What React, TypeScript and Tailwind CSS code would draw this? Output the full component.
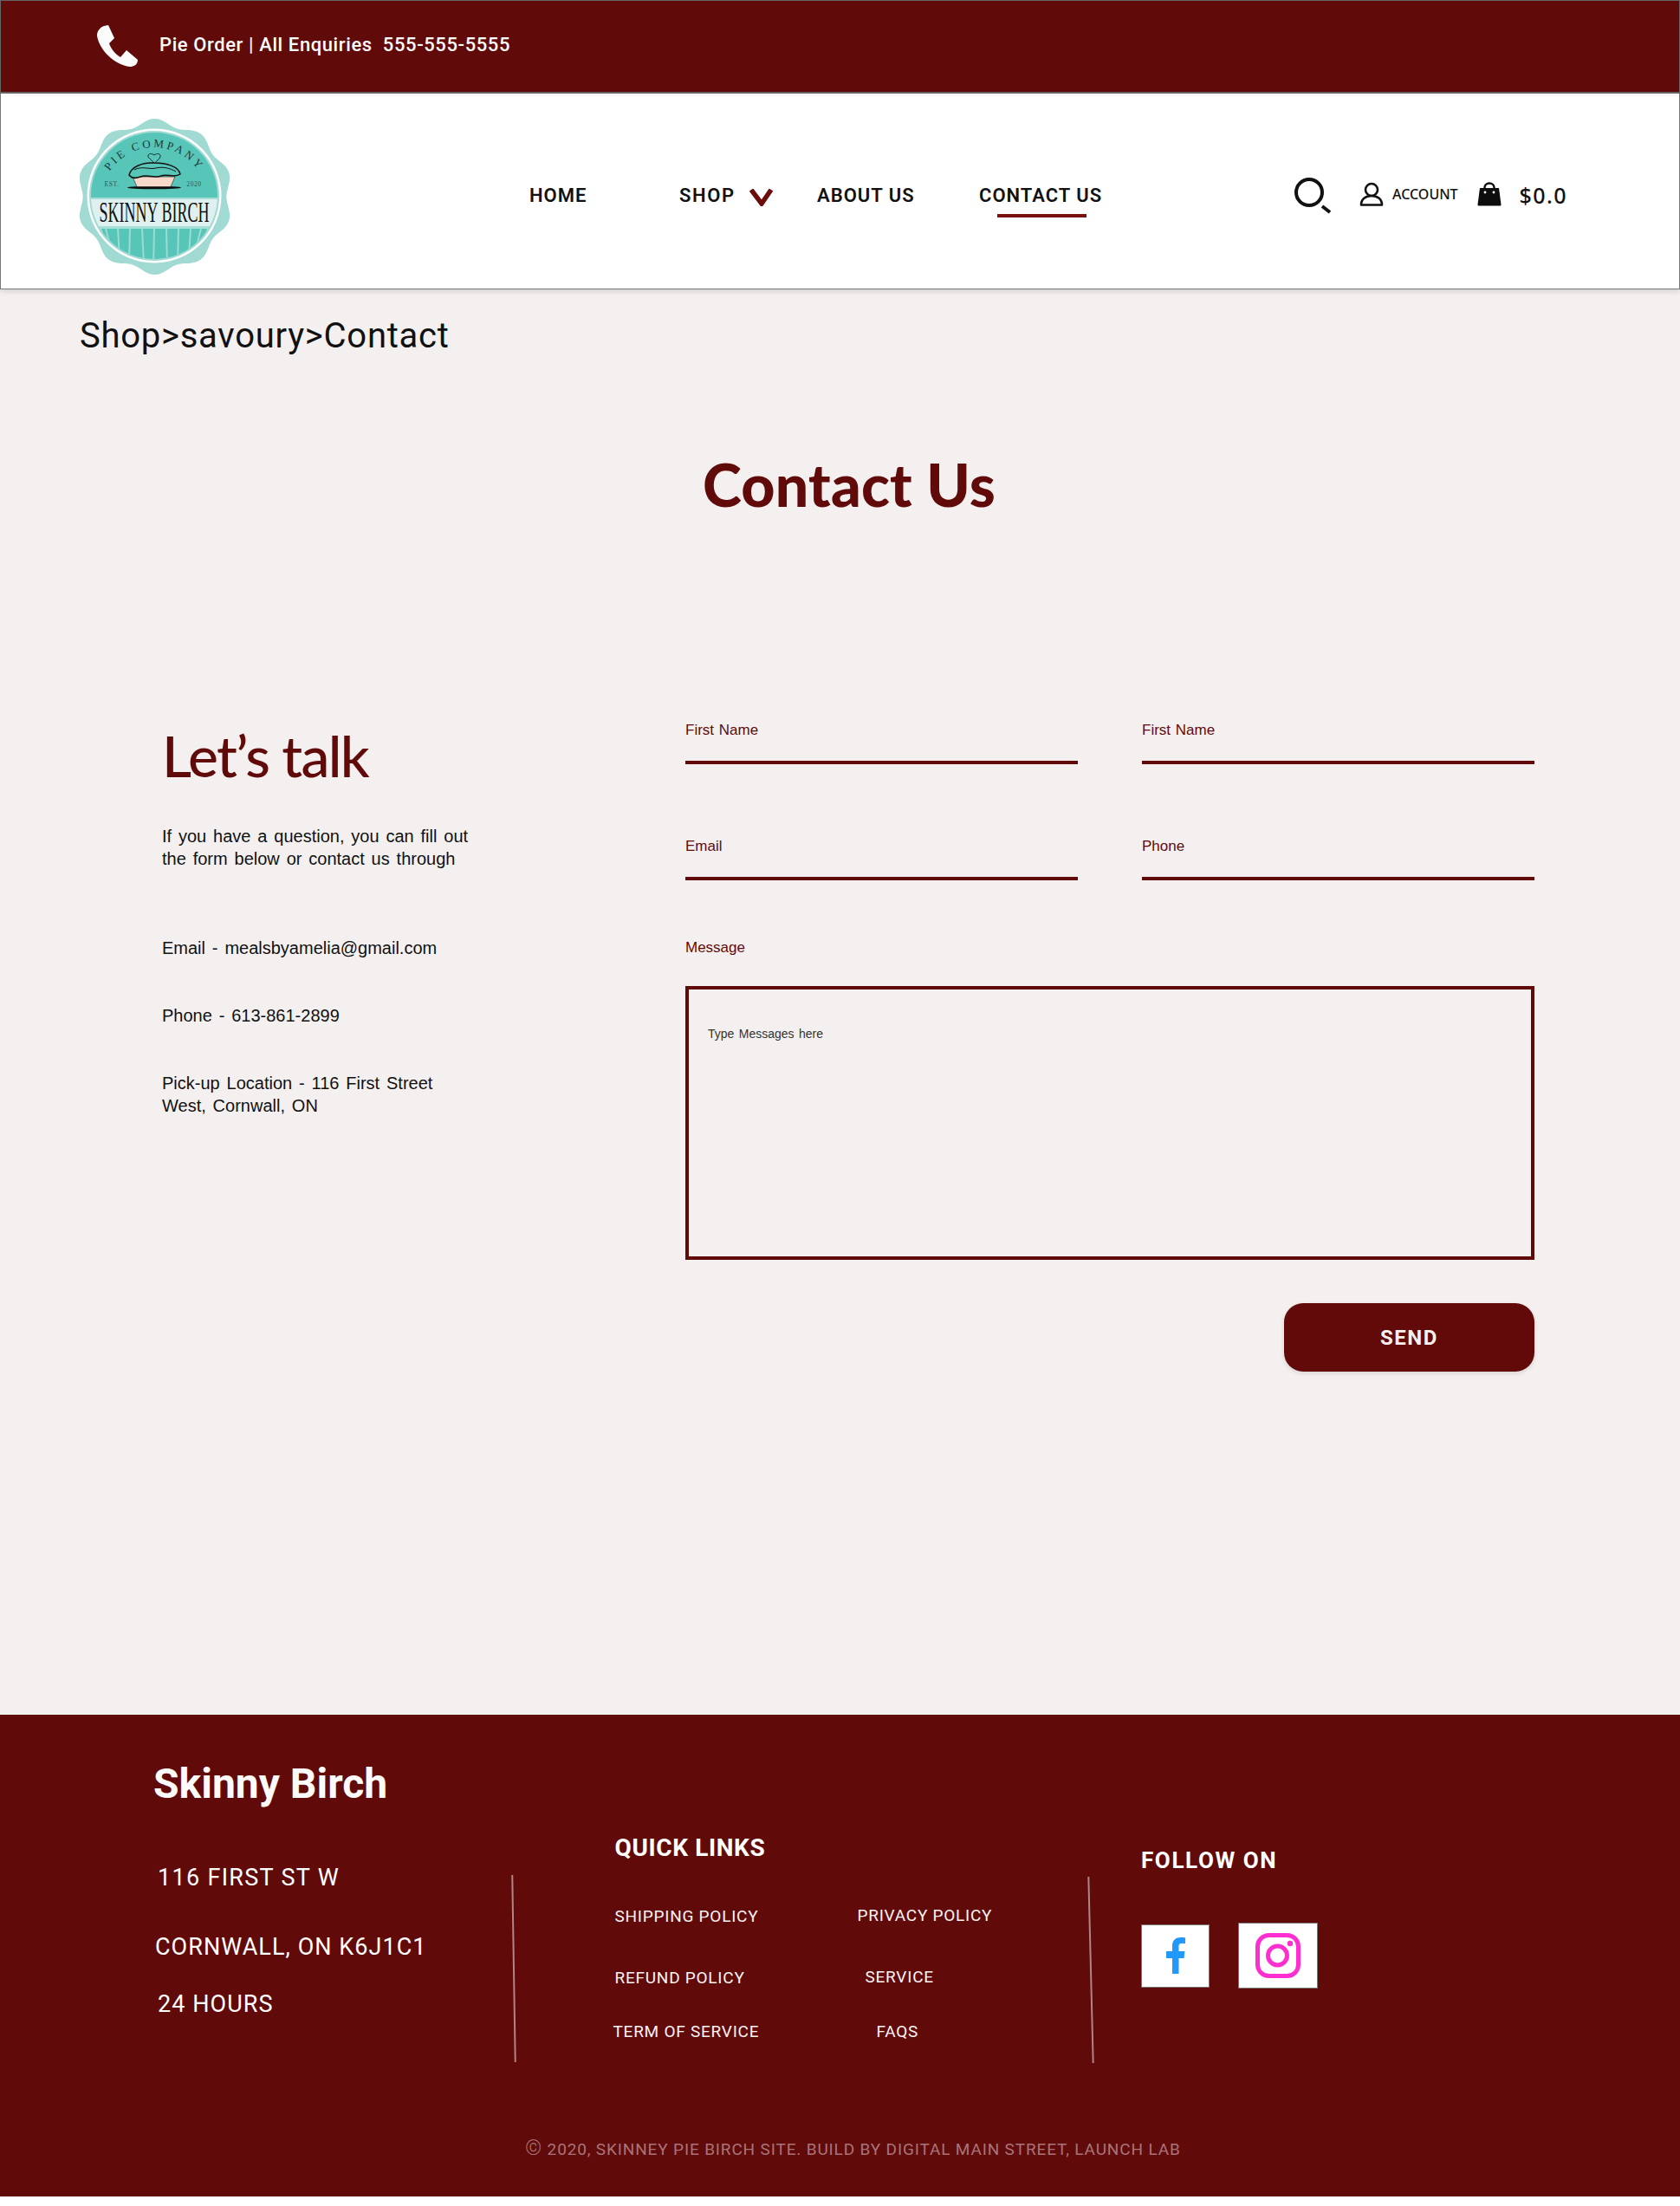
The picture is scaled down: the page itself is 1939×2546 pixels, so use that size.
import React from "react";

function scallopPath() {
  const pts: string[] = [];
  const cx = 86.5, cy = 90;
  for (let i = 0; i < 360; i += 3) {
    const a = (i * Math.PI) / 180;
    const r = 1 + 0.043 * Math.cos(10 * a);
    const x = cx + 86.5 * r * Math.sin(a);
    const y = cy - 86.3 * r * Math.cos(a);
    pts.push(`${x.toFixed(1)} ${y.toFixed(1)}`);
  }
  return "M" + pts.join("L") + "Z";
}

function Logo() {
  const trunks = [
    "M30 127L36 150",
    "M44 127L46 160",
    "M58 127L57 165",
    "M72 127L74 168",
    "M86 127L85 170",
    "M100 127L101 168",
    "M114 127L113 165",
    "M128 127L126 158",
    "M140 127L134 150",
  ];
  return (
    <svg width="173" height="180" viewBox="0 0 173 180" className="block">
      <defs>
        <clipPath id="inner">
          <circle cx="86" cy="89" r="73" />
        </clipPath>
        <path id="arc" d="M24 95 A62 62 0 0 1 148 95" />
      </defs>
      <path d={scallopPath()} fill="#a0dad3" />
      <circle cx="86" cy="89" r="77.5" fill="#ffffff" />
      <circle cx="86" cy="89" r="75" fill="#a0dad3" />
      <g clipPath="url(#inner)">
        <rect x="0" y="0" width="173" height="91" fill="#58c5b9" />
        <rect x="0" y="91" width="173" height="3" fill="#a8ded7" />
        <rect x="0" y="93" width="173" height="31" fill="#def0ef" />
        <rect x="0" y="124" width="173" height="50" fill="#a6dfd8" />
        <path d="M25 127H147L132 170H40Z" fill="#58c5b9" />
        {trunks.map((d) => (
          <path key={d} d={d} stroke="#9bdcd3" strokeWidth="2" fill="none" />
        ))}
      </g>
      <text fontFamily="'Liberation Serif', serif" fontSize="13" letterSpacing="3.2" fill="#1b3a38">
        <textPath href="#arc" startOffset="50%" textAnchor="middle">PIE COMPANY</textPath>
      </text>
      <path d="M86 52c-1-3-5-5-7-8-1-3 3-5 7-2 4-3 8-1 7 2-1 3-5 5-7 8z" fill="none" stroke="#16302f" strokeWidth="1" />
      <text x="37" y="78" textAnchor="middle" fontFamily="'Liberation Serif', serif" fontSize="7.500" letterSpacing=".6" fill="#1f5b57">EST.</text>
      <text x="132" y="78" textAnchor="middle" fontFamily="'Liberation Serif', serif" fontSize="7.500" letterSpacing=".6" fill="#1f5b57">2020</text>
      <ellipse cx="86" cy="79.500" rx="31" ry="1.800" fill="#0d0d0d" />
      <path d="M61 67H110L105 78.500H66Z" fill="#f7d9cc" stroke="#1a1a1a" strokeWidth=".6" />
      <path d="M57 65C59 56 72 50 86 51C100 51 114 55 116 64C109 69 101 63 94 66C86 69 78 64 70 67C65 69 60 69 57 65Z" fill="#58c5b9" stroke="#111" strokeWidth="1.500" />
      <path d="M63 59C72 54 80 59 88 57C96 55 104 57 111 61" fill="none" stroke="#111" strokeWidth="1" />
      <text transform="translate(86 119) scale(1 1.83)" textAnchor="middle" fontFamily="'Liberation Serif', serif" fontSize="18" fill="#0e0e0e">SKINNY BIRCH</text>
    </svg>
  );
}

function PhoneIcon() {
  return (
    <svg width="48" height="48" viewBox="0 0 48 48" className="block shrink-0">
      <path d="M8 1 L13 0 L20 15 L14 21 C16 28 22 34 27 37 L34 29 L47 40 C47 46 42 48 38 48 C20 46 2 28 0 12 C0 7 3 3 8 1 Z" fill="#fbfbfb" />
    </svg>
  );
}

function Field({ label }: { label: string }) {
  return (
    <div>
      <div className="font-['Liberation_Sans'] text-[17px] leading-[20px] [word-spacing:1px] text-[#600a0a]">{label}</div>
      <div className="mt-[25px] h-[4px] bg-[#600a0a]" />
    </div>
  );
}

const navItem = "font-['Roboto'] text-[22px] leading-[26px] font-semibold tracking-[1px] text-[#111]";
const addressLine = "text-[27px] leading-[32px] tracking-[1.05px]";

export default function App() {
  return (
    <div className="w-[1939px] bg-white font-['Roboto']">
      <div className="h-[108px] bg-[#600a0a] border border-[#666] border-b-2 flex pl-[111px]">
        <div className="mt-[28px]"><PhoneIcon /></div>
        <div className="ml-[24px] mt-[38px] text-[22px] leading-[26px] font-medium tracking-[0.6px] text-[#fbfbfb] whitespace-pre">
          Pie Order | All Enquiries  555-555-5555
        </div>
      </div>

      <div className="relative h-[226px] bg-white border border-[#777] border-t-0 shadow-[0_2px_6px_rgba(0,0,0,0.15)] flex items-start">
        <div className="ml-[91px] mt-[29px] w-[519px] shrink-0"><Logo /></div>
        <div className="mt-[105px] flex items-start">
          <div className={`${navItem} w-[173px]`}>HOME</div>
          <div className={`${navItem} w-[159px] flex`}>
            <span className="tracking-[1.6px]">SHOP</span>
            <svg width="28" height="20" viewBox="0 0 28 20" className="ml-[16px] mt-[5px]">
              <path d="M2 1 L14 17 L25 1" fill="none" stroke="#6b0d0d" strokeWidth="5.5" />
            </svg>
          </div>
          <div className={`${navItem} w-[187px]`}>ABOUT US</div>
          <div className={`${navItem} w-[363px]`}>
            <div>CONTACT US</div>
            <div className="ml-[21px] mt-[8px] h-[4px] w-[103px] bg-[#7a1111]" />
          </div>
          <svg width="44" height="42" viewBox="0 0 44 42" className="-mt-[8px] shrink-0">
            <circle cx="18" cy="17" r="15" fill="none" stroke="#111" strokeWidth="4" />
            <path d="M33 33 L42 40" stroke="#111" strokeWidth="4" />
          </svg>
          <svg width="28" height="28" viewBox="0 0 28 28" className="ml-[32px] -mt-[3px] shrink-0">
            <circle cx="14" cy="9" r="7" fill="none" stroke="#111" strokeWidth="2.6" />
            <path d="M2 26.5 C2 20 7 16 14 16 C21 16 26 20 26 26.5 Z" fill="none" stroke="#111" strokeWidth="2.6" strokeLinejoin="round" />
          </svg>
          <div className="ml-[10px] font-['Noto_Sans'] text-[16px] leading-[22px] font-medium tracking-[0px] text-[#111]">ACCOUNT</div>
          <svg width="28" height="28" viewBox="0 0 28 28" className="ml-[22px] -mt-[3px] shrink-0">
            <path d="M3 7 H25 L27.5 26 C27.5 27 27 27.5 26 27.5 H2 C1 27.5 .5 27 .5 26 Z" fill="#0d0d0d" />
            <path d="M8.5 8 V6.5 C8.5 3.5 11 1.5 14 1.5 C17 1.5 19.5 3.5 19.5 6.5 V8" fill="none" stroke="#0d0d0d" strokeWidth="2.4" />
            <circle cx="9" cy="12" r="1.4" fill="#fff" />
            <circle cx="19" cy="12" r="1.4" fill="#fff" />
          </svg>
          <div className="ml-[21px] -mt-[4px] font-['Noto_Sans'] text-[25px] leading-[32px] font-medium tracking-[1.4px] text-[#111]">$0.0</div>
        </div>
      </div>

      <main className="h-[1645px] bg-[#f4f0f0]">
        <div className="pl-[92px] pt-[30px] text-[40px] leading-[47px] tracking-[0.75px] text-[#111]">Shop&gt;savoury&gt;Contact</div>
        <h1 className="ml-[811px] mt-[108px] font-['Lato'] text-[68px] leading-[80px] font-black tracking-[0.2px] text-[#600a0a]">Contact Us</h1>
        <div className="mt-[234px] flex">
          <div className="ml-[187px] w-[604px] shrink-0">
            <h2 className="mt-[1px] font-['Lato'] text-[66px] leading-[76px] font-medium tracking-[-1.7px] text-[#600a0a]">Let’s talk</h2>
            <div className="mt-[42px] font-['Liberation_Sans'] text-[20px] leading-[26px] text-[#111] [word-spacing:2.3px]">
              <p>If you have a question, you can fill out</p>
              <p>the form below or contact us through</p>
              <p className="mt-[77px]">Email - mealsbyamelia@gmail.com</p>
              <p className="mt-[52px]">Phone - 613-861-2899</p>
              <p className="mt-[52px]">Pick-up Location - 116 First Street</p>
              <p>West, Cornwall, ON</p>
            </div>
          </div>
          <div className="w-[980px] shrink-0">
            <div className="grid grid-cols-[453px_453px] gap-x-[74px] gap-y-[85px]">
              <Field label="First Name" />
              <Field label="First Name" />
              <Field label="Email" />
              <Field label="Phone" />
            </div>
            <div className="mt-[68px] font-['Liberation_Sans'] text-[17px] leading-[20px] text-[#600a0a]">Message</div>
            <div className="mt-[34px] h-[316px] border-[4px] border-[#600a0a] pl-[22px] pt-[42px] font-['Liberation_Sans'] text-[14px] leading-[18px] [word-spacing:1.5px] text-[#333]">
              Type Messages here
            </div>
            <button className="mt-[50px] ml-[691px] flex h-[79px] w-[289px] items-center justify-center rounded-[22px] bg-[#620a0a] text-[24px] font-bold tracking-[1.5px] text-[#f8f0f0] shadow-[0_2px_5px_rgba(0,0,0,0.12)]">
              SEND
            </button>
          </div>
        </div>
      </main>

      <footer className="h-[556px] bg-[#600a0a] text-white">
        <div className="flex h-[440px]">
          <div className="ml-[177px] w-[415px] shrink-0 pt-[52px]">
            <div className="text-[48px] leading-[56px] font-bold text-[#fdfbf9]">Skinny Birch</div>
            <div className="mt-[64px] ml-[5px] text-[27px] leading-[32px] tracking-[1.3px]">116 FIRST ST W</div>
            <div className={`mt-[48px] ml-[2px] ${addressLine}`}>CORNWALL, ON K6J1C1</div>
            <div className={`mt-[34px] ml-[5px] ${addressLine}`}>24 HOURS</div>
          </div>
          <div className="mt-[185px] h-[216px] w-[1.5px] shrink-0 -rotate-[0.93deg] bg-white/50" />
          <div className="w-[664px] shrink-0 pl-[116px] pt-[138px]">
            <div className="text-[28px] leading-[31px] font-bold tracking-[0.6px]">QUICK LINKS</div>
            <div className="text-[19px] leading-[22px] tracking-[0.75px] text-[#fbf3f3]">
              <div className="mt-[53px] flex">
                <span className="w-[280px]">SHIPPING POLICY</span>
                <span className="-mt-[1px]">PRIVACY POLICY</span>
              </div>
              <div className="mt-[49px] flex">
                <span className="w-[289px]">REFUND POLICY</span>
                <span className="-mt-[1px]">SERVICE</span>
              </div>
              <div className="mt-[40px] flex">
                <span className="-ml-[2px] w-[304px]">TERM OF SERVICE</span>
                <span>FAQS</span>
              </div>
            </div>
          </div>
          <div className="mt-[187px] h-[215px] w-[1.5px] shrink-0 -rotate-[1.44deg] bg-white/50" />
          <div className="ml-[58px] pt-[153px]">
            <div className="text-[26px] leading-[30px] font-bold tracking-[1.6px]">FOLLOW ON</div>
            <div className="mt-[57px] flex items-center gap-[33px]">
              <div className="flex h-[73px] w-[79px] items-center justify-center border border-[#777] bg-white">
                <svg width="22" height="42" viewBox="0 0 22 42">
                  <path d="M7 42V24H0V16H7V10C7 3 11 0 17 0C19 0 21 .2 22 .4V7H18C15 7 14.500 8.500 14.500 10.500V16H21.500L20.500 24H14.500V42Z" fill="#2199fb" />
                </svg>
              </div>
              <div className="flex h-[76px] w-[92px] items-center justify-center border border-[#777] bg-white">
                <svg width="52" height="52" viewBox="0 0 52 52" fill="none">
                  <rect x="2.500" y="2.500" width="47" height="47" rx="13" stroke="#ff2ed1" strokeWidth="5" />
                  <circle cx="25.500" cy="26" r="11" stroke="#ff2ed1" strokeWidth="5" />
                  <circle cx="40" cy="12" r="3.200" fill="#ff2ed1" />
                </svg>
              </div>
            </div>
          </div>
        </div>
        <div className="ml-[606px] mt-[49px] text-[19px] leading-[22px] tracking-[0.85px] text-[#a97479]">
          <span className="text-[24px] font-light leading-[22px]">©</span> 2020, SKINNEY PIE BIRCH SITE. BUILD BY DIGITAL MAIN STREET, LAUNCH LAB
        </div>
      </footer>
      <div className="h-[11px] bg-white" />
    </div>
  );
}
